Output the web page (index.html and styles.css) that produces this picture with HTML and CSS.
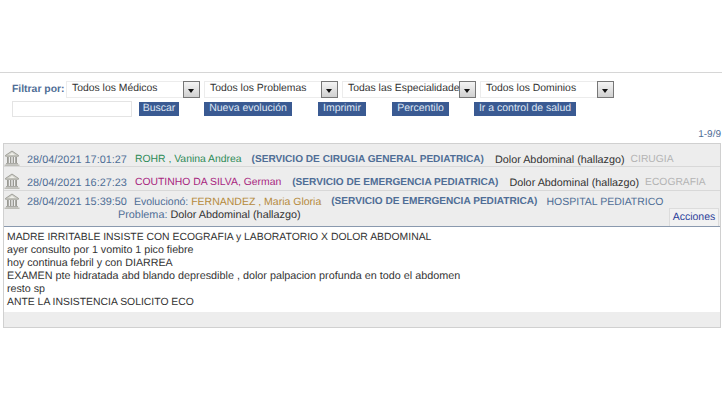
FILE: index.html
```html
<!DOCTYPE html>
<html lang="es">
<head>
<meta charset="utf-8">
<title>Evoluciones</title>
<link rel="stylesheet" href="styles.css">
</head>
<body>
<svg class="defs" width="0" height="0" aria-hidden="true">
  <symbol id="bank" viewBox="0 0 16 16">
    <path d="M1.500 5.400 8 1l6.500 4.400v.8h-13z" fill="#d2d2cc" stroke="#8f8f87" stroke-width=".8"/>
    <path d="M8 2.800 11 4.900H5z" fill="#efefe9"/>
    <path d="M3 7h1.800v6H3zM6 7h1.300v6H6zM8.700 7H10v6H8.700zM11.200 7H13v6h-1.800z" fill="#9a9a94"/>
    <path d="M2 13.200h12v1.200H2z" fill="#9a9a94"/>
    <path d="M.5 14.500h15V16H.5z" fill="#bdbdb7"/>
  </symbol>
</svg>
<main class="page">
  <section class="filters">
    <div class="filter-row">
      <span class="filter-label">Filtrar por:</span>
      <div class="selects">
        <div class="select"><span class="select-text">Todos los Médicos</span><span class="select-arrow"></span></div>
        <div class="select"><span class="select-text">Todos los Problemas</span><span class="select-arrow"></span></div>
        <div class="select"><span class="select-text">Todas las Especialidades</span><span class="select-arrow"></span></div>
        <div class="select"><span class="select-text">Todos los Dominios</span><span class="select-arrow"></span></div>
      </div>
    </div>
    <div class="action-row">
      <div class="search-box"></div>
      <span class="btn btn-search">Buscar</span>
      <span class="btn btn-new">Nueva evolución</span>
      <span class="btn btn-print">Imprimir</span>
      <span class="btn btn-pct">Percentilo</span>
      <span class="btn btn-control">Ir a control de salud</span>
    </div>
  </section>
  <div class="pager">1-9/9</div>
  <section class="panel">
    <div class="row">
      <svg class="icon"><use href="#bank"/></svg>
      <span class="date">28/04/2021 17:01:27</span>
      <span class="doc green">ROHR , Vanina Andrea</span>
      <span class="service">(SERVICIO DE CIRUGIA GENERAL PEDIATRICA)</span>
      <span class="problem">Dolor Abdominal (hallazgo)</span>
      <span class="domain">CIRUGIA</span>
    </div>
    <div class="row row-two">
      <svg class="icon"><use href="#bank"/></svg>
      <span class="date">28/04/2021 16:27:23</span>
      <span class="doc magenta">COUTINHO DA SILVA, German</span>
      <span class="service service-wide">(SERVICIO DE EMERGENCIA PEDIATRICA)</span>
      <span class="problem">Dolor Abdominal (hallazgo)</span>
      <span class="domain">ECOGRAFIA</span>
    </div>
    <div class="row-open">
      <div class="row-open-top">
        <svg class="icon"><use href="#bank"/></svg>
        <span class="date">28/04/2021 15:39:50</span>
        <span class="evo">Evolucionó: <span class="orange">FERNANDEZ , Maria Gloria</span></span>
        <span class="service">(SERVICIO DE EMERGENCIA PEDIATRICA)</span>
        <span class="hospital">HOSPITAL PEDIATRICO</span>
      </div>
      <div class="row-open-bottom">
        <span class="problem-line"><span class="problem-label">Problema:</span> Dolor Abdominal (hallazgo)</span>
        <span class="actions">Acciones</span>
      </div>
    </div>
    <div class="note">
      <p class="caps">MADRE IRRITABLE INSISTE CON ECOGRAFIA y LABORATORIO X DOLOR ABDOMINAL</p>
      <p>ayer consulto por 1 vomito 1 pico fiebre</p>
      <p>hoy continua febril y con DIARREA</p>
      <p class="mixed">EXAMEN pte hidratada abd blando depresdible , dolor palpacion profunda en todo el abdomen</p>
      <p>resto sp</p>
      <p class="caps">ANTE LA INSISTENCIA SOLICITO ECO</p>
    </div>
    <div class="panel-foot"></div>
  </section>
</main>
</body>
</html>
```

FILE: styles.css
```css
* { box-sizing: border-box; }
html, body { margin: 0; padding: 0; background: #fff; }
body { font-family: "Liberation Sans", Arial, sans-serif; font-size: 11px; color: #333; width: 722px; height: 411px; overflow: hidden; text-rendering: geometricPrecision; }
.defs { position: absolute; }
.page { padding-top: 72px; }
.filters { border-top: 1px solid #d6d6d6; height: 57px; padding: 8px 0 0 12px; }
.filter-row { display: flex; align-items: center; height: 17px; }
.filter-label { width: 54px; font-weight: bold; font-size: 10.400px; color: #4f6d96; white-space: nowrap; }
.selects { display: flex; gap: 4px; }
.select { display: flex; width: 134px; height: 17px; border: 1px solid #ececec; background: #fff; }
.select-text { flex: 1; min-width: 0; padding: 0 0 0 5px; font-size: 10.400px; line-height: 13px; white-space: nowrap; overflow: hidden; color: #333; }
.select-arrow { position: relative; flex: none; width: 17px; margin: -1px -1px -1px 0; height: 17px; border: 1px solid #777; background: linear-gradient(#f4f4f4, #d0d0d0); }
.select-arrow::after { content: ""; position: absolute; left: 4px; top: 7px; border: 3.500px solid transparent; border-top: 4px solid #111; border-bottom: 0; }
.action-row { display: flex; align-items: center; height: 16px; margin-top: 3px; }
.search-box { width: 120px; height: 16px; border: 1px solid #e4e4e4; background: #fff; }
.btn { display: block; height: 14px; font-size: 10.500px; line-height: 12px; background: #3a5a92; color: #dfe6f2; text-align: center; white-space: nowrap; }
.btn-search { width: 40px; margin-left: 7px; }
.btn-new { width: 88px; margin-left: 25px; }
.btn-print { width: 48px; margin-left: 26px; }
.btn-pct { width: 57px; margin-left: 26px; }
.btn-control { width: 102px; margin-left: 25px; }
.pager { height: 14px; line-height: 12px; text-align: right; color: #4f6d96; font-size: 10px; padding-right: 1px; }
.panel { margin: 0 1px 0 3px; height: 185px; border: 1px solid #d0d0d0; background: #ededed; display: flex; flex-direction: column; }
.row { display: flex; align-items: center; height: 23px; padding: 9px 0 0; border-bottom: 1px solid #d8d8d8; white-space: nowrap; }
.row-two { height: 24px; padding-top: 8px; }
.icon { width: 16px; height: 16px; flex: none; }
.row .icon { margin-top: -3px; }
.date { margin-left: 7px; font-size: 10.900px; color: #4f6d96; }
.doc { margin-left: 8px; font-size: 10.400px; }
.green { color: #2e8b57; }
.magenta { color: #a8267f; }
.orange { color: #b58a3c; }
.service { margin-left: 10px; font-weight: bold; font-size: 10.100px; color: #4f6d96; }
.service-wide { margin-left: 11px; }
.problem { margin-left: 11px; font-size: 10.800px; color: #333; }
.domain { margin-left: 6px; font-size: 10.300px; color: #b4b4b4; }
.evo { margin-left: 7px; font-size: 10.500px; color: #4f6d96; }
.hospital { margin-left: 9px; font-size: 10.500px; color: #4f6d96; }
.row-open { height: 36px; display: flex; flex-direction: column; border-bottom: 1px solid #8a99ae; }
.row-open-top { display: flex; align-items: center; height: 17px; padding: 4px 0 0; white-space: nowrap; }
.row-open-top .icon { margin-top: -2px; }
.row-open-bottom { flex: 1; display: flex; justify-content: space-between; align-items: flex-end; padding-left: 114px; }
.problem-line { align-self: flex-start; margin-top: 1px; font-size: 10.850px; line-height: 13px; color: #333; }
.problem-label { color: #4f6d96; }
.actions { height: 18px; width: 50px; margin-right: 1px; font-size: 10.500px; line-height: 17px; text-align: center; color: #2d3f9a; background: #f2f2f2; border: 1px solid #dcdcdc; border-bottom: 0; }
.note { height: 85px; background: #fff; padding: 4px 3px 0; color: #333; }
.note p { margin: 0; font-size: 10.700px; line-height: 13px; white-space: nowrap; }
.note .caps { font-size: 10.400px; }
.note .mixed { font-size: 10.800px; }
.panel-foot { flex: 1; background: #ededed; }
```
